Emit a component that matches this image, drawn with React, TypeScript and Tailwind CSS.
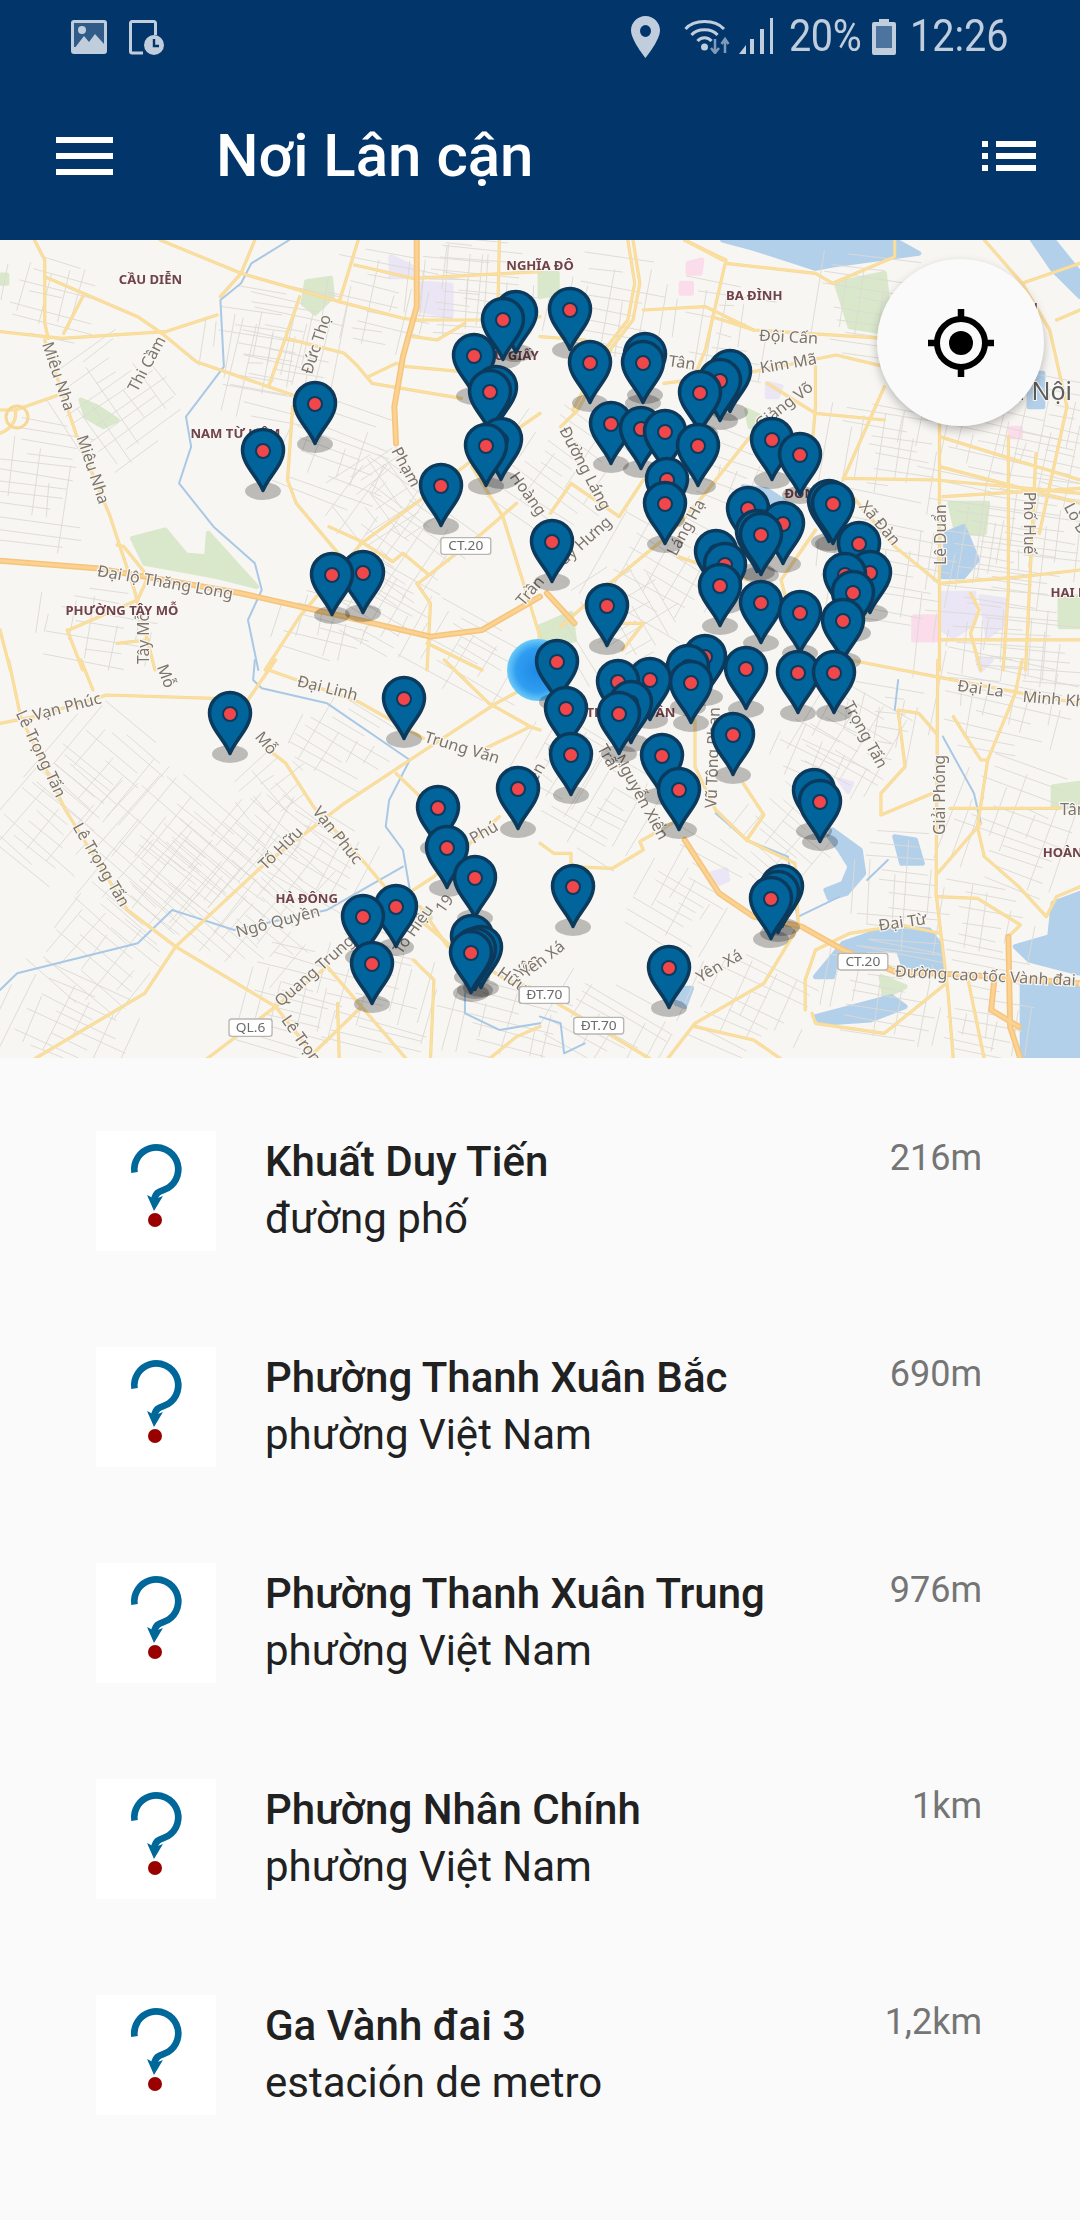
import React from "react";

type Lbl = [string, number, number, number?, number?];
type Zone = {
  t: string;
  water: string[];
  park: string[];
  lilac: string[];
  pink: string[];
  river: string[];
  roads: string[];
  orange: string[];
  roadText: Lbl[];
  placeText: Lbl[];
  shields: [string, number, number, number, number][];
};

const zones: Zone[] = [
  {
    t: "translate(0 240) scale(.3444 .3333)",
    water: [],
    park: [
      "M385 895 L480 870 L540 945 L600 950 L605 880 L745 1040 L630 1010 L420 970Z",
      "M890 125 L960 115 L965 170 L915 220 L880 190Z",
      "M235 480 L280 500 L340 540 L300 560 L250 530Z",
      "M0 105 L20 105 L20 130 L0 130Z",
    ],
    lilac: ["M1220 130 L1310 135 L1310 230 L1220 210Z", "M1135 50 L1195 80 L1195 110 L1135 110Z"],
    pink: [],
    river: ["M840 0 L730 70 L700 130 L640 180 L650 380 L540 530 L555 620 L520 730 L620 860 L740 970 L760 1050 L720 1140 L750 1290"],
    roads: [
      "M465 0 L700 100 L985 185 L1170 235 L1210 240",
      "M130 110 L400 230 L470 280 L570 365 L780 440 L850 465",
      "M0 275 L180 295 L480 275 L630 225",
      "M100 0 L130 60 L130 250 L140 295",
      "M185 280 L240 170",
      "M640 170 L700 100 L740 0",
      "M780 440 L870 170",
      "M1040 0 L985 185",
      "M1030 75 L1200 115 L1568 95",
      "M830 295 L1000 340 L1040 380 L1080 430 L1340 475",
      "M1200 240 L1400 240 L1568 230",
      "M1200 290 L1270 300 L1350 250",
      "M1070 410 L1150 370 L1180 380 L1400 400",
      "M850 500 L835 720 L860 790 L990 950 L1050 1000",
      "M770 1290 L870 1130 L1050 910 L1220 780 L1360 670 L1568 520",
      "M0 510 L45 510 L170 465",
      "M130 300 L220 580 L320 830 L390 1050 L450 1290",
      "M1450 0 L1445 240",
      "M1370 680 L1460 830 L1568 1190",
      "M1215 1030 L1400 880 L1500 790",
      "M1210 1030 L1250 1090 L1240 1290",
      "M955 860 L1040 900 L1140 965 L1170 940 L1240 1000",
      "M200 1170 L400 1080 L430 1010 L360 920 L340 915",
      "M195 1170 L240 1290",
      "M340 1210 L430 1200",
      "M0 1170 L30 1290",
      "M0 580 Q50 560 45 510",
      "M1240 1210 L1400 1290",
    ],
    orange: [
      "M0 962 L280 985 L700 1060 L1000 1130 L1250 1190 L1400 1170 L1568 1070",
      "M1210 0 L1210 200 L1170 350 L1145 500 L1150 610",
    ],
    roadText: [
      ["Miêu Nha", 122, 312, 72],
      ["Miêu Nha", 222, 592, 72],
      ["Thi Cầm", 398, 458, -62],
      ["Đức Thọ", 905, 405, -72],
      ["Phạm", 1135, 632, 62],
      ["Đại lộ Thăng Long", 280, 1008, 10],
      ["Tây Mỗ", 432, 1272, -90],
      ["Hoàng", 1478, 710, 55],
      ["Trần", 1520, 1100, -50],
    ],
    placeText: [
      ["CẦU DIỄN", 345, 131],
      ["NAM TỪ LIÊM", 553, 594],
      ["PHƯỜNG TÂY MỖ", 190, 1126],
      ["NGHĨA ĐÔ", 1470, 90],
      ["CẦU GIẤY", 1385, 360],
    ],
    shields: [["CT.20", 1280, 893, 145, 50]],
  },
  {
    t: "translate(540 240) scale(.3444 .3333)",
    water: [
      "M530 0 L1030 0 L1100 40 L850 75 L800 85 L620 25Z",
      "M1430 0 L1490 0 L1568 100 L1568 170 L1490 90Z",
      "M1180 880 L1230 860 L1270 960 L1230 1010 L1170 1010Z",
      "M590 740 L660 750 L710 785 L600 790Z",
      "M1420 400 L1460 400 L1460 500 L1420 500Z",
    ],
    park: [
      "M860 130 L1000 100 L1020 280 L900 260Z",
      "M1190 790 L1300 790 L1290 880 L1210 880Z",
      "M0 1160 L90 1120 L100 1200 L0 1210Z",
      "M0 100 L50 100 L50 160 L0 170Z",
      "M600 510 L640 530 L610 560Z",
      "M1510 1070 L1568 1070 L1568 1160 L1510 1160Z",
    ],
    lilac: [
      "M1170 1060 L1260 1060 L1260 1150 L1200 1190 L1170 1170Z",
      "M1280 1070 L1350 1080 L1350 1150 L1300 1190Z",
      "M660 430 L700 440 L690 470 L660 470Z",
    ],
    pink: [
      "M1085 1130 L1150 1130 L1150 1200 L1085 1200Z",
      "M410 130 L440 130 L440 160 L410 160Z",
      "M1365 565 L1395 565 L1395 590 L1365 590Z",
      "M430 70 L470 60 L465 100 L430 100Z",
    ],
    river: [],
    roads: [
      "M0 290 L130 300 L200 330",
      "M270 0 L290 130 L270 240 L210 320 L110 510 L60 560",
      "M255 0 L275 130 L255 240 L195 320 L95 510",
      "M420 0 L540 60 L480 330 L440 430",
      "M540 70 L800 100 L850 130 L1030 50 L1030 0",
      "M300 210 L480 200 L620 270 L1000 295",
      "M360 430 L620 395 L860 345 L1000 380",
      "M800 380 L800 500 L790 620",
      "M1000 440 L880 720",
      "M880 715 L1150 720 L1568 760",
      "M610 590 L480 760 L380 880 L180 1050 L60 1160",
      "M300 720 L230 830 L90 730 L30 820",
      "M660 430 L800 520 L1000 540",
      "M1160 540 L1160 1290",
      "M1160 590 L1568 720",
      "M1160 680 L1568 790",
      "M1170 770 L1568 745",
      "M1360 590 L1360 1050 L1345 1290",
      "M1440 640 L1410 1290",
      "M1530 500 L1450 880",
      "M1160 1030 L1400 1010 L1568 990",
      "M900 760 L1030 920 L1160 1030",
      "M800 870 L700 1020 L720 1100",
      "M1160 1200 L1568 1200",
      "M1400 130 L1568 70",
      "M1500 240 L1568 210",
      "M1290 0 L1400 130 L1480 270 L1530 500",
      "M1250 1060 L1275 1110 L1250 1180 L1280 1290",
      "M180 1150 L300 1150 L240 1230",
      "M400 950 L600 1020",
      "M530 60 L420 0",
      "M500 230 L620 270",
    ],
    orange: ["M20 1060 L100 1150"],
    roadText: [
      ["Đội Cấn", 635, 302, 3],
      ["Kim Mã", 642, 400, -10],
      ["Tân", 372, 378, 8],
      ["Giảng Võ", 640, 570, -38],
      ["Đường Láng", 55, 570, 63],
      ["Láng Hạ", 395, 950, -62],
      ["Duy Hưng", 45, 1000, -42],
      ["Xã Đàn", 925, 800, 50],
      ["Lê Duẩn", 1178, 975, -90],
      ["Phố Huế", 1405, 755, 90],
      ["Lò Đúc", 1520, 800, 62],
    ],
    placeText: [
      ["BA ĐÌNH", 540, 180],
      ["XUÂN", 1335, 215],
      ["ĐỐNG ĐA", 710, 775],
      ["HAI BÀ TRƯNG", 1482, 1072],
    ],
    shields: [],
  },
  {
    t: "translate(0 660) scale(.3444 .3333)",
    water: [],
    park: ["M1215 770 L1240 745 L1250 775 L1230 790Z"],
    lilac: [],
    pink: [],
    river: [
      "M740 0 L735 60 L760 85 L950 130 L1190 300 L1130 420 L1120 500 L1170 570 L1190 690",
      "M0 990 L50 940 L400 850 L500 750 L560 770 L680 810 L950 750 L1170 620",
      "M1350 1000 L1350 1060 L1450 1110 L1568 1090",
    ],
    roads: [
      "M25 0 L60 170 L190 450 L370 750 L510 860 L800 1040 L920 1197",
      "M100 1197 L420 1000 L510 860 L760 620 L1000 430 L1190 300 L1440 130 L1568 60",
      "M0 190 L100 170 L310 105 L620 115",
      "M720 120 L800 0",
      "M780 30 L1040 125 L1230 235",
      "M780 270 L830 310 L910 440 L1060 610 L1150 720 L1300 850 L1470 960 L1568 990",
      "M1150 340 L1250 440",
      "M235 0 L270 90",
      "M1200 690 L1260 650 L1450 470",
      "M600 1197 L800 1040 L950 920 L1180 1197",
      "M1050 1040 L900 1190",
      "M980 1030 L985 1197",
      "M1200 900 L1260 960 L1250 1197",
      "M1220 740 L1300 860",
      "M1420 1197 L1500 1130 L1568 1100",
      "M1290 0 L1420 130 L1540 200 L1568 210",
      "M1540 200 L1400 270",
    ],
    orange: [],
    roadText: [
      ["Vạn Phúc", 100, 182, -15],
      ["Lê Trọng Tấn", 45, 160, 65],
      ["Lê Trọng Tấn", 210, 500, 60],
      ["Đại Linh", 860, 78, 14],
      ["Trung Văn", 1230, 245, 17],
      ["Tố Hữu", 770, 632, -45],
      ["Vạn Phúc", 905, 455, 52],
      ["Ngô Quyền", 690, 832, -15],
      ["Quang Trung", 815, 1042, -42],
      ["Lê Trọng Tấn", 815, 1080, 55],
      ["Tô Hiệu", 1165, 885, -55],
      ["Mỗ", 738, 232, 50],
      ["Mỗ", 455, 20, 70],
      ["Phú", 1375, 552, -30],
      ["19", 1288, 762, -55],
      ["Hữu", 1440, 945, 35],
      ["Yên", 1510, 955, -40],
    ],
    placeText: [["HÀ ĐÔNG", 800, 730]],
    shields: [
      ["QL.6", 665, 1077, 125, 52],
      ["ĐT.70", 1507, 980, 145, 50],
    ],
  },
  {
    t: "translate(540 660) scale(.3444 .3333)",
    water: [
      "M800 950 L880 850 L1020 800 L1130 810 L1165 860 L1170 930 L1060 930 L1040 870 L950 870 L860 900 L850 950Z",
      "M800 1070 L1020 1010 L1060 1040 L960 1080 L820 1090Z",
      "M850 510 L930 570 L940 640 L890 700 L840 715 L830 690 L880 670 L900 620 L870 570 L840 530Z",
      "M1030 530 L1090 540 L1110 610 L1050 610Z",
      "M1568 700 L1490 730 L1480 830 L1380 860 L1420 900 L1568 940Z",
      "M1400 970 L1568 980 L1568 1197 L1400 1197Z",
      "M420 985 L440 985 L420 1040 L395 1030Z",
    ],
    park: [
      "M1490 380 L1568 370 L1568 440 L1490 440Z",
      "M990 950 L1060 980 L1000 1010Z",
    ],
    lilac: ["M500 640 L540 630 L545 660 L520 670Z", "M870 360 L905 370 L895 395Z", "M1270 0 L1310 0 L1280 30Z"],
    pink: [],
    river: [
      "M510 460 L600 540 L720 590 L750 790 L720 850",
      "M1170 230 L1260 400 L1280 490",
      "M0 1070 L60 1090 L70 1180 L130 1150",
      "M750 770 L870 710",
      "M1010 600 L950 660",
      "M1040 60 L1030 150",
    ],
    roads: [
      "M1155 0 L1150 700 L1185 1000 L1200 1197",
      "M900 0 L1150 50 L1400 100 L1568 130",
      "M1400 0 L1380 100 L1300 300 L1270 500 L1290 590 L1390 680 L1470 770 L1500 710 L1568 680",
      "M1040 150 L1100 160 L1150 220",
      "M1040 155 L1060 320 L990 400 L990 465 L1140 400",
      "M1190 445 L1510 445",
      "M1155 640 L1280 490",
      "M1150 710 L1270 715 L1395 795 L1360 830",
      "M770 1050 L770 960 L800 870 L900 820 L1050 795 L1160 820",
      "M790 1060 L800 1090 L1000 1120 L1180 970",
      "M370 1197 L450 1090 L650 970 L750 800",
      "M450 1100 L620 1140 L700 1197",
      "M600 540 L650 465 L590 370",
      "M600 540 L740 610 L750 790",
      "M0 550 L40 580 L90 580 L90 620 L210 625 L300 570 L290 545 L400 480",
      "M50 1030 L180 1110 L320 1197",
      "M450 180 L450 320 L510 450 L600 540",
      "M1200 170 L1280 300 L1300 300",
      "M1240 945 L1290 1197",
    ],
    orange: [
      "M420 540 L520 700 L620 770 L760 800 L880 870 L1030 935 L1250 945 L1568 970",
      "M1360 830 L1365 1100 L1395 1197",
      "M1320 950 L1310 1050 L1390 1100",
    ],
    roadText: [
      ["Đại La", 1210, 92, 8],
      ["Minh Khai", 1400, 125, 5],
      ["Trọng Tấn", 880, 135, 62],
      ["Nguyễn Xiển", 215, 295, 62],
      ["Vũ Tông Phan", 512, 445, -88],
      ["Giải Phóng", 1175, 525, -90],
      ["Đại Từ", 985, 812, -8],
      ["Yên Xá", 465, 968, -30],
      ["Yên Xá", -40, 955, -38],
      ["Đường cao tốc Vành đai 3", 1030, 950, 3],
      ["Tân", 1510, 465, 0],
      ["Nguyễn", -70, 470, -60],
      ["Trãi", 165, 265, 60],
    ],
    placeText: [
      ["THANH XUÂN", 135, 170],
      ["HOÀNG MAI", 1460, 592],
    ],
    shields: [
      ["CT.20", 865, 880, 145, 50],
      ["ĐT.70", -60, 980, 145, 50],
      ["ĐT.70", 98, 1072, 145, 50],
    ],
  },
];

const clusters: number[][] = [
  [396, 540, 70, 60, 35], [482, 290, 60, 50, 5], [258, 340, 55, 50, 10], [286, 357, 50, 70, 12], [379, 303, 55, 50, 12],
  [120, 400, 60, 60, -35], [35, 490, 55, 70, 8], [344, 457, 60, 50, 20], [389, 500, 50, 50, -35], [448, 283, 40, 40, 5],
  [327, 627, 50, 30, 15], [465, 657, 70, 40, 30], [96, 630, 60, 40, 10], [379, 607, 50, 40, 30], [50, 300, 50, 40, 15],
  [609, 307, 60, 50, 10], [557, 473, 60, 60, 35], [722, 333, 50, 50, 10], [660, 573, 60, 60, 30], [988, 447, 90, 50, 12],
  [988, 557, 70, 50, 8], [1039, 540, 60, 60, 8], [884, 457, 60, 50, 10], [884, 573, 70, 50, 10], [988, 640, 70, 50, 5],
  [1056, 440, 50, 60, 12], [867, 307, 50, 50, 8], [620, 620, 60, 50, -30], [720, 470, 50, 40, 20], [1040, 650, 60, 40, 5],
  [103, 777, 60, 60, 40], [172, 843, 80, 60, 40], [207, 887, 70, 60, 40], [275, 853, 60, 50, 40], [327, 860, 60, 40, 30],
  [344, 743, 50, 40, 30], [275, 787, 40, 30, -40], [52, 827, 50, 60, 40], [103, 960, 60, 50, 40], [69, 1027, 70, 50, 25],
  [293, 1010, 50, 60, 15], [379, 993, 60, 60, 15], [499, 1027, 70, 40, 15], [258, 927, 60, 40, 40], [155, 893, 60, 60, 40],
  [609, 810, 60, 50, 30], [609, 1027, 60, 40, 30], [747, 1010, 60, 50, 25], [688, 900, 50, 60, 30], [822, 760, 50, 40, 25],
  [850, 743, 50, 50, 30], [884, 993, 60, 50, 10], [884, 727, 40, 40, 10], [1005, 710, 70, 50, 12], [1022, 827, 70, 60, 20],
  [988, 927, 50, 40, 10], [902, 893, 50, 60, 5], [781, 843, 50, 50, 40], [988, 1027, 50, 50, 10], [560, 760, 40, 40, 30],
];

function streets(): string {
  let seed = 12345;
  const rnd = () => {
    seed = (seed * 16807) % 2147483647;
    return seed / 2147483647;
  };
  const out: string[] = [];
  const seg = (c: number[], ax: number, ay: number, bx: number, by: number) => {
    const r = (c[4] * Math.PI) / 180;
    const cs = Math.cos(r);
    const sn = Math.sin(r);
    const p = (x: number, y: number) => `${(c[0] + x * cs - y * sn).toFixed(1)} ${(c[1] + x * sn + y * cs).toFixed(1)}`;
    out.push(`M${p(ax, ay)}L${p(bx, by)}`);
  };
  clusters.forEach((c) => {
    const [, , w, h] = c;
    for (let y = -h; y <= h; y += 7 + rnd() * 9) {
      const a = -w + rnd() * w * 0.9;
      const b = w - rnd() * w * 0.9;
      seg(c, a, y, b, y + rnd() * 5 - 2.5);
    }
    for (let x = -w; x <= w; x += 10 + rnd() * 18) {
      const a = -h + rnd() * h * 0.9;
      const b = h - rnd() * h * 0.9;
      seg(c, x, a, x + rnd() * 5 - 2.5, b);
    }
  });
  return out.join("");
}

const streetPath = streets();

const pins: [number, number][] = [
  [263, 451], [315, 404], [503, 320], [516, 313], [474, 356], [490, 392], [496, 388], [486, 446], [501, 440], [441, 486],
  [332, 575], [363, 573], [570, 310], [590, 363], [643, 363], [645, 355], [700, 393], [720, 381], [730, 372], [611, 424],
  [641, 429], [665, 432], [698, 446], [667, 480], [665, 504], [552, 542], [607, 606], [557, 662], [772, 440], [800, 455],
  [748, 509], [783, 524], [761, 535], [757, 532], [833, 504], [829, 502], [859, 544], [870, 573], [845, 575], [853, 593],
  [843, 621], [716, 552], [725, 565], [720, 586], [761, 603], [800, 613], [746, 669], [798, 673], [834, 673], [618, 682],
  [650, 680], [691, 683], [688, 667], [705, 657], [566, 709], [631, 703], [619, 714], [571, 755], [733, 735], [662, 756],
  [679, 790], [814, 791], [820, 802], [573, 887], [669, 968], [771, 899], [782, 887], [778, 893], [230, 714], [404, 699],
  [438, 808], [447, 848], [475, 878], [518, 789], [396, 907], [363, 917], [372, 964], [471, 953], [472, 937], [481, 948],
  [475, 950],
];
const sortedPins = [...pins].sort((a, b) => a[1] - b[1]);

const labelFont = { fontFamily: '"Noto Sans", "Open Sans", sans-serif' };

function MapArt() {
  const fillLayer = (k: "water" | "park" | "lilac" | "pink", color: string) =>
    zones.map((z, i) => (
      <g key={k + i} transform={z.t} stroke={color} strokeWidth="5" strokeLinejoin="round">
        {z[k].map((d, j) => (
          <path key={j} d={d} fill={color} vectorEffect="non-scaling-stroke" />
        ))}
      </g>
    ));
  const lineLayer = (k: "river" | "roads" | "orange", color: string, w: number) =>
    zones.map((z, i) => (
      <g key={k + w + i} transform={z.t} fill="none" stroke={color} strokeWidth={w} strokeLinejoin="round" strokeLinecap="round">
        {z[k].map((d, j) => (
          <path key={j} d={d} vectorEffect="non-scaling-stroke" />
        ))}
      </g>
    ));
  return (
    <svg viewBox="0 240 1080 818" width="1080" height="818" className="block" style={labelFont}>
      <defs>
        <radialGradient id="me">
          <stop offset="0%" stopColor="#1e88e5" />
          <stop offset="70%" stopColor="#2f9df0" />
          <stop offset="100%" stopColor="#6ccbf8" />
        </radialGradient>
      </defs>
      <rect x="0" y="240" width="1080" height="818" fill="#f8f6f2" />
      {fillLayer("park", "#d9e8cb")}
      {fillLayer("lilac", "#ebe6f5")}
      {fillLayer("pink", "#fbdcea")}
      {fillLayer("water", "#b3d0ea")}
      <path d={streetPath} fill="none" stroke="#dcd9d4" strokeWidth="0.9" />
      {lineLayer("river", "#a9c8e6", 2)}
      {lineLayer("roads", "#f6d896", 3.2)}
      {lineLayer("roads", "#fbdf9f", 2)}
      {lineLayer("orange", "#f5c47e", 6)}
      {lineLayer("orange", "#fbd28f", 3)}
      <circle cx="17" cy="417" r="11" fill="none" stroke="#f6d896" strokeWidth="3" />
      {zones.map((z, i) => (
        <g key={"t" + i} transform={z.t}>
          {z.roadText.map(([s, x, y, r], j) => (
            <text
              key={j}
              x={x}
              y={y}
              transform={r ? `rotate(${r} ${x} ${y})` : undefined}
              fontSize="47"
              fill="#7d746b"
              stroke="#f8f6f2"
              strokeWidth="7"
              paintOrder="stroke"
            >
              {s}
            </text>
          ))}
          {z.placeText.map(([s, x, y], j) => (
            <text key={j} x={x} y={y} fontSize="38" fontWeight="700" fill="#70424a" stroke="#f8f6f2" strokeWidth="6" paintOrder="stroke">
              {s}
            </text>
          ))}
          {z.shields.map(([s, x, y, w, h], j) => (
            <g key={j}>
              <rect x={x} y={y} width={w} height={h} rx="8" fill="#fff" stroke="#b9b6b1" strokeWidth="4" />
              <text x={x + w / 2} y={y + h - 13} fontSize="40" textAnchor="middle" fill="#6b6b6b">
                {s}
              </text>
            </g>
          ))}
        </g>
      ))}
      <text x="1072" y="400" fontSize="25" fill="#5e5e5e" textAnchor="end" stroke="#f8f6f2" strokeWidth="2" paintOrder="stroke">
        Hà Nội
      </text>
      <circle cx="538" cy="670" r="31" fill="url(#me)" />
      {sortedPins.map(([x, y], i) => (
        <ellipse key={i} cx={x} cy={y + 40} rx="18" ry="9" fill="#000" fillOpacity="0.24" />
      ))}
      {sortedPins.map(([x, y], i) => (
        <g key={i} transform={`translate(${x} ${y})`}>
          <path
            d="M0 39.500 C-5 26 -20.500 14 -20.500 -1 A20.500 20.500 0 1 1 20.500 -1 C20.500 14 5 26 0 39.500Z"
            fill="#01649b"
            stroke="#0c3a5c"
            strokeWidth="3.500"
            strokeLinejoin="round"
          />
          <circle r="7" fill="#f2474a" stroke="#0c3a5c" strokeWidth="2" />
        </g>
      ))}
    </svg>
  );
}

function Question() {
  return (
    <svg viewBox="0 0 120 120" className="block h-[120px] w-[120px]">
      <path
        d="M38.500 41.500 A22 22 0 1 1 72 57 C66 60 60 60 58.500 68"
        fill="none"
        stroke="#00679b"
        strokeWidth="6.700"
      />
      <path d="M58 80 L51 64 L59 68 L67 65Z" fill="#00679b" />
      <circle cx="59" cy="89" r="7" fill="#990000" />
    </svg>
  );
}

const rows = [
  ["Khuất Duy Tiến", "đường phố", "216m"],
  ["Phường Thanh Xuân Bắc", "phường Việt Nam", "690m"],
  ["Phường Thanh Xuân Trung", "phường Việt Nam", "976m"],
  ["Phường Nhân Chính", "phường Việt Nam", "1km"],
  ["Ga Vành đai 3", "estación de metro", "1,2km"],
];

const C = "#c0cddd";
const BG = "#02366b";

function StatusBar() {
  return (
    <div className="relative flex h-[72px] items-start text-[#c0cddd]">
      <svg width="36" height="34" viewBox="0 0 36 34" className="ml-[71px] mt-[20px]">
        <rect width="36" height="34" rx="3" fill={C} />
        <rect x="3" y="3" width="30" height="24" fill={BG} fillOpacity="0.75" />
        <circle cx="11" cy="10" r="4" fill={C} />
        <path d="M3 29 L13 16 L18 22 L24 14 L33 24 L33 31 L3 31Z" fill={C} />
      </svg>
      <svg width="35" height="36" viewBox="0 0 35 36" className="ml-[22px] mt-[20px]">
        <path d="M14 33 H3 A1.500 1.500 0 0 1 1.500 31.500 V3 A1.500 1.500 0 0 1 3 1.500 H25 A1.500 1.500 0 0 1 26.500 3 V15" fill="none" stroke={C} strokeWidth="3" />
        <circle cx="25" cy="25" r="10" fill={C} />
        <path d="M25 19 V26 H30" fill="none" stroke={BG} strokeWidth="2.400" />
      </svg>
      <svg width="29" height="42" viewBox="0 0 29 42" className="ml-[467px] mt-[16px]">
        <path fillRule="evenodd" d="M14.500 0 C22.500 0 29 6.500 29 14.500 C29 24 14.500 42 14.500 42 C14.500 42 0 24 0 14.500 C0 6.500 6.500 0 14.500 0Z M14.500 9 A5.500 6 0 1 0 14.500 21 A5.500 6 0 1 0 14.500 9Z" fill={C} />
      </svg>
      <svg width="48" height="36" viewBox="0 0 48 36" className="ml-[24px] mt-[18px]">
        <g fill="none" stroke={C} strokeWidth="3">
          <path d="M1.500 11 C10 1 31 1 40 11" />
          <path d="M7.500 17 C13 10 28 10 33.500 17" />
          <path d="M13.500 23 C17 18.500 24 18.500 27.500 23" />
        </g>
        <circle cx="20.500" cy="29" r="3.500" fill={C} />
        <path d="M31 21 V34 M27 30 L31 35 L35 30" fill="none" stroke="#7f9bb9" strokeWidth="2.500" />
        <path d="M41 35 V22 M37.500 26 L41 21 L44.500 26" fill="none" stroke="#7f9bb9" strokeWidth="2.500" />
      </svg>
      <svg width="35" height="36" viewBox="0 0 35 36" className="ml-[7px] mt-[18px]">
        <path d="M0 36 L7 27 V36Z" fill={C} />
        <rect x="11" y="21" width="4" height="15" fill={C} />
        <rect x="21" y="11" width="4" height="25" fill={C} />
        <rect x="31" y="0" width="3" height="36" fill={C} />
      </svg>
      <div className="ml-[15px] mt-[11px] w-[69px] origin-left scale-x-[0.88] whitespace-nowrap text-[45px] leading-[50px] tracking-[-0.5px]">
        20%
      </div>
      <svg width="24" height="36" viewBox="0 0 24 36" className="ml-[14px] mt-[19px]">
        <path d="M7 0 H17 V3 H22 A2 2 0 0 1 24 5 V34 A2 2 0 0 1 22 36 H2 A2 2 0 0 1 0 34 V5 A2 2 0 0 1 2 3 H7Z" fill={C} />
        <rect x="4" y="7" width="16" height="22" fill="#4d739f" />
      </svg>
      <div className="ml-[14px] mt-[11px] w-[96px] origin-left scale-x-[0.88] whitespace-nowrap text-[45px] leading-[50px]">
        12:26
      </div>
    </div>
  );
}

export default function App() {
  return (
    <div className="flex h-[2220px] w-[1080px] flex-col overflow-hidden bg-[#fafafa]" style={{ fontFamily: "Roboto, sans-serif" }}>
      <header className="h-[240px] shrink-0 bg-[#02366b]">
        <StatusBar />
        <div className="flex h-[168px] items-center">
          <div className="ml-[56px] flex w-[57px] flex-col gap-[10px]">
            <div className="h-[6px] bg-white" />
            <div className="h-[6px] bg-white" />
            <div className="h-[6px] bg-white" />
          </div>
          <h1 className="ml-[103px] text-[60px] font-medium leading-[66px] text-white">Nơi Lân cận</h1>
          <div className="ml-auto mr-[44px] flex flex-col gap-[6px]">
            {[0, 1, 2].map((i) => (
              <div key={i} className="flex gap-[8px]">
                <div className="h-[6px] w-[6px] bg-white" />
                <div className="h-[6px] w-[40px] bg-white" />
              </div>
            ))}
          </div>
        </div>
      </header>

      <div className="relative h-[818px] shrink-0 overflow-hidden">
        <div className="blur-[0.4px]">
          <MapArt />
        </div>
        <button className="absolute right-[36px] top-[19px] flex h-[167px] w-[167px] items-center justify-center rounded-full bg-[#fafafa] shadow-[0_4px_10px_rgba(0,0,0,0.25)]">
          <svg width="66" height="68" viewBox="0 0 66 68">
            <circle cx="33" cy="34" r="24" fill="none" stroke="#000" strokeWidth="6" />
            <circle cx="33" cy="34" r="12" fill="#000" />
            <path d="M33 0 V10 M33 58 V68 M0 34 H10 M56 34 H66" stroke="#000" strokeWidth="6.500" />
          </svg>
        </button>
      </div>

      <ul className="flex flex-col gap-[96px] pt-[73px]">
        {rows.map(([name, type, dist]) => (
          <li key={name} className="flex h-[120px] items-start">
            <div className="ml-[96px] h-[120px] w-[120px] shrink-0 bg-white">
              <Question />
            </div>
            <div className="ml-[49px] mt-[2px] flex-1">
              <div className="text-[42px] font-medium leading-[57px] text-[#212121]">{name}</div>
              <div className="text-[42px] leading-[57px] text-[#212121]">{type}</div>
            </div>
            <div className="mr-[98px] mt-[3px] text-[36px] leading-[48px] text-[#757575]">{dist}</div>
          </li>
        ))}
      </ul>
    </div>
  );
}
